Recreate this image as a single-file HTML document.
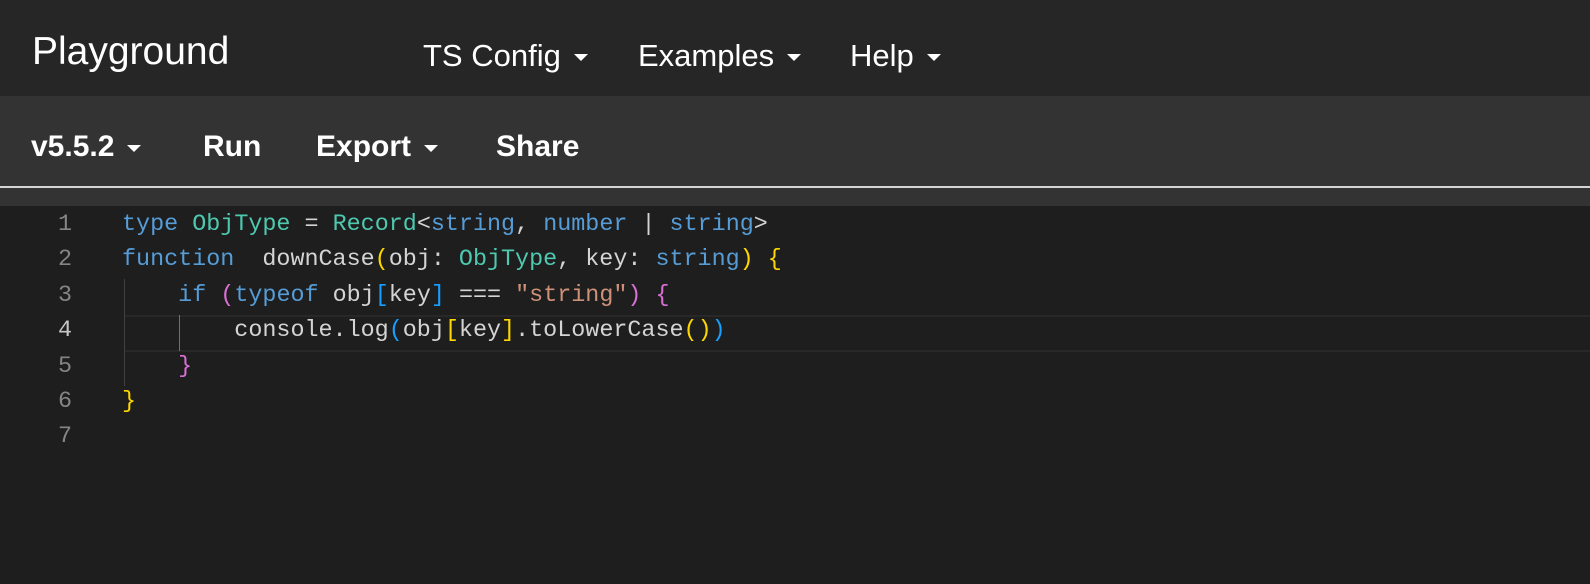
<!DOCTYPE html>
<html><head><style>
body{margin:0;width:1590px;height:584px;background:#1e1e1e;overflow:hidden;font-family:"Liberation Sans",sans-serif;color:#fff;position:relative}
.top{position:absolute;left:0;top:0;width:1590px;height:96px;background:#262626}
.sub{position:absolute;left:0;top:96px;width:1590px;height:90px;background:#333}
.line{position:absolute;left:0;top:186px;width:1590px;height:2px;background:#d4d4d4}
.band{position:absolute;left:0;top:188px;width:1590px;height:18px;background:#333}
.t{position:absolute;white-space:nowrap}
.car{display:inline-block;width:0;height:0;border-left:7px solid transparent;border-right:7px solid transparent;border-top:7px solid #fff;vertical-align:middle;margin-left:13px}
.code{position:absolute;font-family:"Liberation Mono",monospace;font-size:23.4px;white-space:pre;line-height:35.4px}
.ln{left:0;width:72px;text-align:right;color:#858585;top:208px}
.src{left:122px;top:208px;color:#d4d4d4}
.k{color:#569cd6}.ty{color:#4ec9b0}.s{color:#ce9178}.y{color:#ffd700}.p{color:#da70d6}.b{color:#179fff}
.hl{position:absolute;left:124px;top:315px;width:1468px;height:33px;border-top:2px solid #282828;border-bottom:2px solid #282828}
.g{position:absolute;width:1px;background:#404040}
</style></head><body>
<div class="top"></div><div class="sub"></div><div class="line"></div><div class="band"></div>
<div class="t" style="left:32px;top:30px;font-size:39px">Playground</div>
<div class="t" style="left:423px;top:38px;font-size:31px">TS Config<span class="car"></span></div>
<div class="t" style="left:638px;top:38px;font-size:31px">Examples<span class="car"></span></div>
<div class="t" style="left:850px;top:38px;font-size:31px">Help<span class="car"></span></div>
<div class="t" style="left:31px;top:130px;font-size:30px;font-weight:bold">v5.5.2<span class="car"></span></div>
<div class="t" style="left:203px;top:130px;font-size:30px;font-weight:bold">Run</div>
<div class="t" style="left:316px;top:130px;font-size:30px;font-weight:bold">Export<span class="car"></span></div>
<div class="t" style="left:496px;top:130px;font-size:30px;font-weight:bold">Share</div>
<div class="hl"></div>
<div class="g" style="left:124px;top:279px;height:107px"></div>
<div class="g" style="left:179px;top:315px;height:36px;background:#707070"></div>
<div class="code ln">1
2
3
<span style="color:#c6c6c6">4</span>
5
6
7</div>
<div class="code src"><span class="k">type</span> <span class="ty">ObjType</span> = <span class="ty">Record</span>&lt;<span class="k">string</span>, <span class="k">number</span> | <span class="k">string</span>&gt;
<span class="k">function</span>  downCase<span class="y">(</span>obj: <span class="ty">ObjType</span>, key: <span class="k">string</span><span class="y">)</span> <span class="y">{</span>
    <span class="k">if</span> <span class="p">(</span><span class="k">typeof</span> obj<span class="b">[</span>key<span class="b">]</span> === <span class="s">"string"</span><span class="p">)</span> <span class="p">{</span>
        console.log<span class="b">(</span>obj<span class="y">[</span>key<span class="y">]</span>.toLowerCase<span class="y">()</span><span class="b">)</span>
    <span class="p">}</span>
<span class="y">}</span>
</div>
</body></html>
